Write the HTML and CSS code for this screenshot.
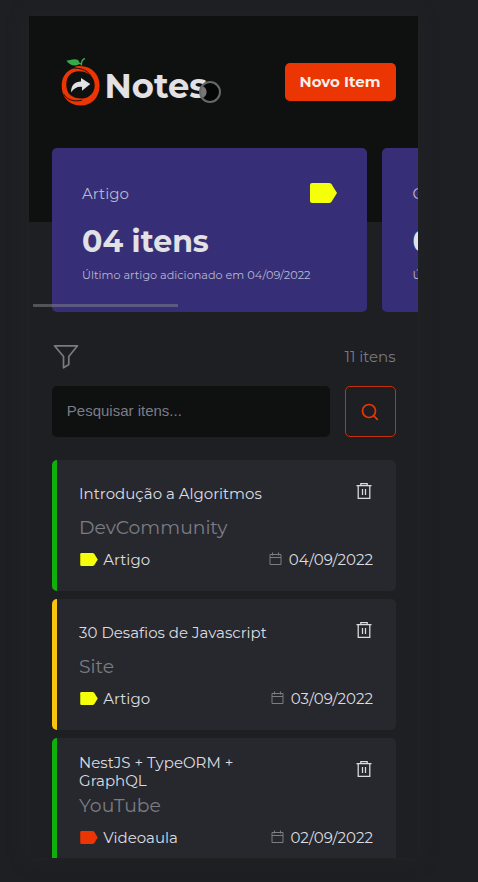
FILE: index.html
```html
<!DOCTYPE html>
<html lang="pt-BR">
<head>
<meta charset="utf-8">
<title>Notes</title>
<link rel="stylesheet" href="styles.css">
</head>
<body>
<svg width="0" height="0" class="defs">
  <symbol id="tag" viewBox="0 0 27 20"><path d="M2 0H19Q20.500 0 21.500 1.200L27 10L21.500 18.800Q20.500 20 19 20H2Q0 20 0 18V2Q0 0 2 0Z" fill="currentColor"/></symbol>
  <symbol id="trash" viewBox="0 0 16 18"><g fill="none" stroke="currentColor" stroke-width="1.250"><path d="M.5 3.700H15.500M2.200 3.700V16.400H13.800V3.700M4.800 3.700V1.500H11.200V3.700M6.500 7V13M9.500 7V13"/></g></symbol>
  <symbol id="calendar" viewBox="0 0 13 14"><path d="M1 2.500H12V12.500H1ZM1 5.500H12M3.500 .5V3.500M9.500 .5V3.500" fill="none" stroke="currentColor" stroke-width="1"/></symbol>
</svg>
<main class="app">
  <header class="header">
    <div class="brand">
      <svg class="logo" viewBox="0 0 40 50">
        <path fill="#eb3503" fill-rule="evenodd" d="M.3 28C.3 17 8 10 16 10.500C12 9.500 14 8.200 19 8.200C31 8.200 39 17 39 28C39 40 31 48.500 20 48.500C11 48.500 5 44 2 37.500C.8 34.500 .3 31 .3 28ZM5 27C5 37 11 41.500 22 41.300C29 40.500 34 35 34 28C34 19 27 13.500 18 13.500C10 13.500 5 19 5 27Z"/>
        <path fill="none" stroke="#0f1110" stroke-width="1" d="M2 36.500C6 43 13 45 21 43M14 10.300C21 10.500 26.500 13 30 18"/>
        <path fill="#e1e1e6" d="M20 20.500L29.500 26.500L21 33.500V29.500C16 29 13 31 10 35C9.500 28 14 24 20 24Z"/>
        <path fill="#33ab4b" d="M5 2.500C9 3 12 0 17 2L19 5.500C15 9 9 8.500 5 2.500Z"/>
        <path fill="none" stroke="#33ab4b" stroke-width="1.500" d="M24 0.500Q20 2 20.500 7.500M13 4L20 6"/>
      </svg>
      <h1 class="brand-name">Notes</h1>
      <i class="cursor"></i>
    </div>
    <button class="new-item">Novo Item</button>
  </header>
  <section class="carousel">
    <article class="summary">
      <div class="summary-top"><span>Artigo</span><svg class="summary-tag"><use href="#tag"/></svg></div>
      <strong>04 itens</strong>
      <small>Último artigo adicionado em 04/09/2022</small>
    </article>
    <article class="summary">
      <div class="summary-top"><span>C</span></div>
      <strong>0</strong>
      <small>Ú</small>
    </article>
    <i class="scrollbar"></i>
  </section>
  <section class="tools">
    <svg class="filter" viewBox="0 0 26 26"><path d="M1.500 1.800H24.500L15.800 12.500V20.500L10.500 23.800V12.500Z" fill="none" stroke="currentColor" stroke-width="1.700" stroke-linejoin="round"/></svg>
    <span class="count">11 itens</span>
  </section>
  <form class="search">
    <input type="text" placeholder="Pesquisar itens...">
    <button type="button"><svg viewBox="0 0 18 18"><g fill="none" stroke="currentColor" stroke-width="1.700" stroke-linecap="round"><circle cx="8" cy="8" r="6.500"/><path d="M13 13L16.300 16.300"/></g></svg></button>
  </form>
  <section class="list">
    <article class="item green">
      <div class="row title"><span>Introdução a Algoritmos</span><svg class="trash"><use href="#trash"/></svg></div>
      <div class="source">DevCommunity</div>
      <div class="row meta"><span class="kind"><svg><use href="#tag"/></svg>Artigo</span><span class="date"><svg><use href="#calendar"/></svg>04/09/2022</span></div>
    </article>
    <article class="item amber">
      <div class="row title"><span>30 Desafios de Javascript</span><svg class="trash"><use href="#trash"/></svg></div>
      <div class="source">Site</div>
      <div class="row meta"><span class="kind"><svg><use href="#tag"/></svg>Artigo</span><span class="date"><svg><use href="#calendar"/></svg>03/09/2022</span></div>
    </article>
    <article class="item green">
      <div class="row title"><span>NestJS + TypeORM +<br>GraphQL</span><svg class="trash"><use href="#trash"/></svg></div>
      <div class="source">YouTube</div>
      <div class="row meta"><span class="kind video"><svg><use href="#tag"/></svg>Videoaula</span><span class="date"><svg><use href="#calendar"/></svg>02/09/2022</span></div>
    </article>
  </section>
</main>
</body>
</html>
```
FILE: styles.css
```css
* { box-sizing: border-box; margin: 0; padding: 0; }
body { height: 882px; overflow: hidden; background: #1e1f23; padding: 16px 0 0 29px; font-family: Montserrat, Inter, sans-serif; font-size: 15px; color: #e1e1e6; }
.defs { position: absolute; }
svg { display: block; flex: none; }
.app { width: 389px; height: 842px; overflow: hidden; background: #1e1f23; box-shadow: 0 0 14px 2px #232324; }
.header { height: 206px; background: #0f1110; padding: 42px 22.500px 0 32px; display: flex; justify-content: space-between; align-items: flex-start; }
.brand { display: flex; position: relative; }
.logo { width: 40px; height: 49px; }
.brand-name { font-size: 33.750px; line-height: 42px; font-weight: 700; margin: 7px 0 0 3.500px; }
.cursor { position: absolute; left: 137.500px; top: 23px; width: 22px; height: 22px; border: 2px solid #68686b; border-radius: 50%; background: radial-gradient(circle at -1px 9px, #77777b 0 6px, rgba(5,5,6,.9) 7px); }
.new-item { width: 111px; height: 38px; margin-top: 4.500px; border: 0; border-radius: 5px; background: #eb3503; color: #fbeee9; font: 700 15px Montserrat, Inter, sans-serif; }
.carousel { position: relative; display: flex; gap: 15px; margin-top: -74px; padding-left: 22.800px; height: 163.500px; overflow: hidden; }
.summary { flex: 0 0 315.500px; height: 163.500px; background: #362f77; border-radius: 5px; padding: 35px 30px 0 30.300px; color: #bab7d0; }
.summary-top { display: flex; justify-content: space-between; height: 20px; line-height: 21px; }
.summary-tag { width: 27px; height: 20px; color: #f4ff09; }
.summary strong { display: block; margin-top: 20px; font-size: 30px; line-height: 38px; font-weight: 700; color: #e1e1e6; }
.summary small { display: block; margin-top: 7px; font-size: 11.250px; line-height: 14px; }
.scrollbar { position: absolute; left: 4px; top: 156px; width: 145px; height: 3px; background: rgba(125,125,135,.55); }
.tools { display: flex; justify-content: space-between; align-items: center; height: 26px; margin: 32px 22.500px 0 24px; color: #7a7a82; }
.filter { width: 26px; height: 26px; margin-top: 1px; }
.search { display: flex; gap: 15px; margin: 16.500px 22.500px 0 22.800px; }
.search input { flex: 1; min-width: 0; height: 51px; background: #0f1110; border: 0; border-radius: 5px; padding: 0 15px 2px; font: 15px "Liberation Sans", sans-serif; }
.search input::placeholder { color: #7c7c8a; }
.search button { width: 51px; height: 51px; border: 1px solid #c4320b; border-radius: 5px; background: none; color: #eb3503; display: grid; place-items: center; }
.search button svg { width: 18px; height: 18px; }
.list { display: grid; gap: 7.500px; margin: 22.500px 22.500px 0 22.800px; }
.item { height: 131.500px; border-radius: 5px; border-left: 5px solid; background: #27282d; padding: 22px 22.500px 0 22.300px; }
.item > * { color: #dcdce0; }
.green { border-color: #0faf0c; }
.amber { border-color: #f7c411; }
.row { display: flex; justify-content: space-between; align-items: center; }
.title { height: 24px; line-height: 18px; }
.trash { width: 16px; height: 18px; margin: -5px 1.500px 0 0; }
.item .source { margin-top: 9px; font-size: 18.750px; line-height: 26px; color: #7c7c83; }
.meta { height: 20px; margin-top: 9px; line-height: 20px; }
.kind, .date { display: flex; align-items: center; gap: 5.500px; }
.date { gap: 6.700px; }
.kind svg { width: 18px; height: 13px; color: #f4ff09; margin-left: .7px; }
.video svg { color: #eb3503; }
.date svg { width: 13px; height: 14px; color: #7c7c83; margin-top: -2px; }
```
